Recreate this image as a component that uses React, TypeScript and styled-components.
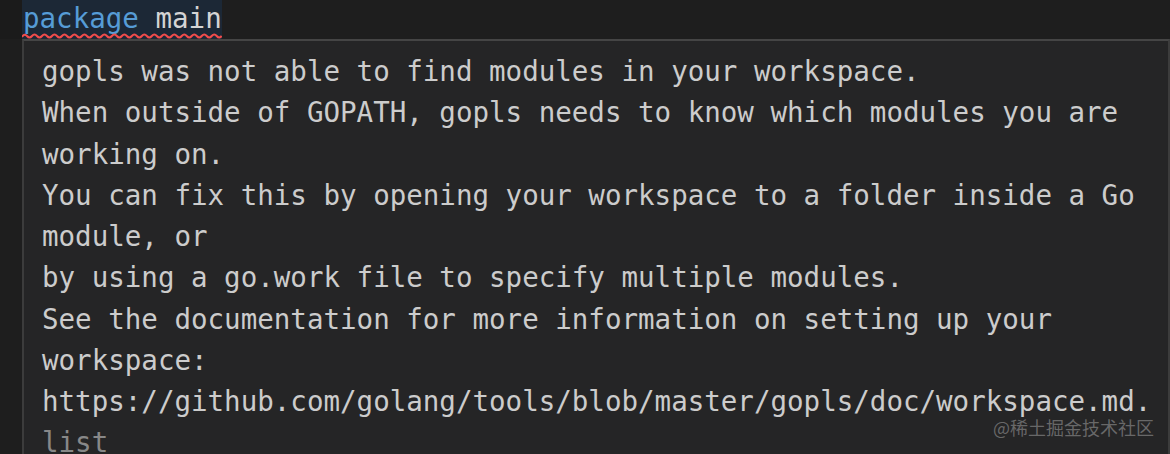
import React from "react";
import styled, { createGlobalStyle } from "styled-components";

const Global = createGlobalStyle`
  html, body { margin: 0; padding: 0; background: #1e1e1e; }
  body { width: 1170px; height: 454px; overflow: hidden; }
`;

const mono = `"DejaVu Sans Mono", "Liberation Mono", monospace`;

const Editor = styled.div`
  position: relative;
  width: 1170px;
  height: 454px;
  display: flex;
  flex-direction: column;
  background: #1e1e1e;
  overflow: hidden;
  font-family: ${mono};
  font-size: 27.5px;
`;

const CodeRow = styled.div`
  display: flex;
  height: 39px;
  flex-shrink: 0;
`;

const Gutter = styled.div`
  width: 22px;
  background: #1b1b1b;
`;

const Highlight = styled.div`
  position: relative;
  display: flex;
  align-items: flex-start;
  padding-left: 1px;
  background: #1c2836;
  line-height: 37px;
  white-space: pre;
`;

const Token = styled.span<{ $color: string }>`
  color: ${(p) => p.$color};
`;

const Squiggle = styled.svg`
  position: absolute;
  left: 0;
  bottom: 0;
  width: 100%;
  height: 7px;
`;

const Hover = styled.div`
  flex: 1;
  margin-left: 22px;
  border-top: 2px solid #454545;
  border-left: 2px solid #3c3c3c;
  border-right: 2px solid #3c3c3c;
  background: #252526;
  padding: 10px 0 0 18px;
  overflow: hidden;
`;

const Line = styled.div<{ $dim?: boolean }>`
  line-height: 41.25px;
  white-space: pre;
  color: ${(p) => (p.$dim ? "#888888" : "#cccccc")};
`;

const Dim = styled.span`
  color: #888888;
`;

const Watermark = styled.div`
  position: absolute;
  left: 993px;
  top: 414px;
  font-family: "Noto Sans CJK SC", sans-serif;
  font-size: 18px;
  color: rgba(150, 150, 150, 0.6);
  white-space: nowrap;
`;

function wave(width: number) {
  const period = 10;
  let d = "M0 5";
  for (let x = 0; x < width; x += period) {
    d += ` Q${x + period / 4} 1 ${x + period / 2} 4 T${x + period} 4`;
  }
  return d;
}

const lines = [
  "gopls was not able to find modules in your workspace.",
  "When outside of GOPATH, gopls needs to know which modules you are",
  "working on.",
  "You can fix this by opening your workspace to a folder inside a Go",
  "module, or",
  "by using a go.work file to specify multiple modules.",
  "See the documentation for more information on setting up your",
  "workspace:",
];

export default function App() {
  return (
    <>
      <Global />
      <Editor>
        <CodeRow>
          <Gutter />
          <Highlight>
            <Token $color="#569cd6">package</Token>
            <Token $color="#d4d4d4"> main</Token>
            <Squiggle viewBox="0 0 200 7" preserveAspectRatio="none">
              <path d={wave(200)} fill="none" stroke="#f14c4c" strokeWidth="2" />
            </Squiggle>
          </Highlight>
        </CodeRow>
        <Hover>
          {lines.map((l) => (
            <Line key={l}>{l}</Line>
          ))}
          <Line>
            https://github.com/golang/tools/blob/master/gopls/doc/workspace.md.<Dim> go</Dim>
          </Line>
          <Line $dim>list</Line>
        </Hover>
        <Watermark>@稀土掘金技术社区</Watermark>
      </Editor>
    </>
  );
}
